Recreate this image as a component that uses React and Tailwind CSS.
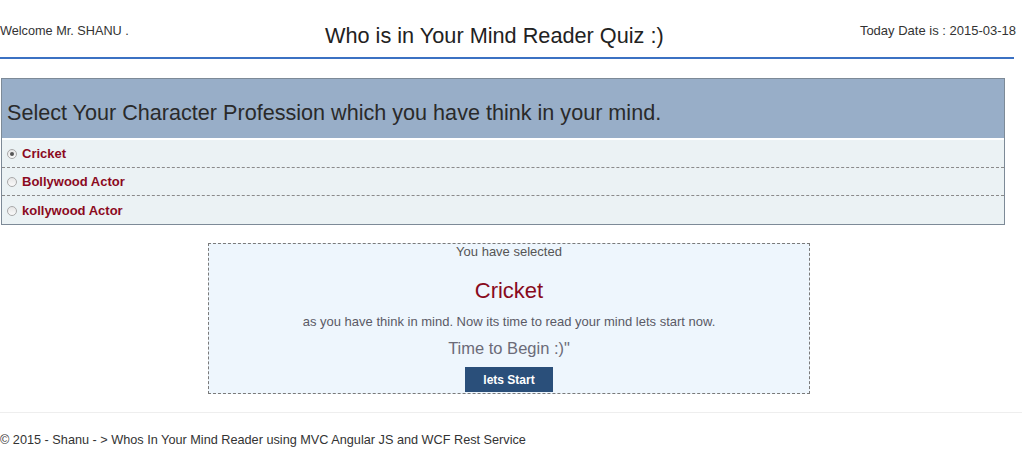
import React from "react";

function Radio({ checked }) {
  return (
    <span className="flex h-[10px] w-[10px] items-center justify-center rounded-full border border-[#a9a9a9] bg-gradient-to-b from-[#e6e6e6] to-[#fafafa]">
      {checked ? <span className="h-[4px] w-[4px] rounded-full bg-[#555]" /> : null}
    </span>
  );
}

function Row({ label, checked, last }) {
  return (
    <div
      className={
        "flex h-[28px] items-center gap-[5px] pl-[5px] pt-[1px] " +
        (last ? "" : "border-b border-dashed border-[#8a8a8a]")
      }
    >
      <Radio checked={checked} />
      <span className="text-[13px] font-bold text-[#8b0a1e]">{label}</span>
    </div>
  );
}

export default function App() {
  return (
    <div className="w-[1022px] bg-white text-[#333]" style={{ fontFamily: '"Liberation Sans", Arial, sans-serif' }}>
      <div className="flex h-[57px] w-[1016px] items-start justify-between">
        <span className="mt-[24px] text-[12.7px] leading-[14px]">Welcome Mr. SHANU .</span>
        <span className="mt-[23px] text-[21.7px] leading-[26px] text-[#222]">Who is in Your Mind Reader Quiz :)</span>
        <span className="mt-[24px] text-[13px] leading-[14px]">Today Date is : 2015-03-18</span>
      </div>
      <div className="h-[2px] w-[1014px] bg-[#3b71c3]" />

      <div className="ml-[1px] mt-[19px] w-[1004px] border border-[#7d8a97] bg-[#ebf2f4]">
        <div className="h-[61px] border-b-2 border-white bg-[#98aec8] pl-[5px] pt-[21px] text-[21.6px] leading-[25px] text-[#2a2a2a]">
          Select Your Character Profession which you have think in your mind.
        </div>
        <Row label="Cricket" checked />
        <Row label="Bollywood Actor" />
        <Row label="kollywood Actor" last />
      </div>

      <div className="mt-[18px] flex w-[1018px] justify-center">
        <div className="flex h-[151px] w-[602px] flex-col items-center border border-dashed border-[#7a7a7a] bg-[#eef6fd]">
          <span className="mt-[1px] text-[13px] leading-[14px] text-[#555]">You have selected</span>
          <span className="mt-[19px] text-[22px] leading-[26px] text-[#880a1c]">Cricket</span>
          <span className="mt-[11px] text-[13px] leading-[14px] text-[#5a5a66]">
            as you have think in mind. Now its time to read your mind lets start now.
          </span>
          <span className="mt-[9px] text-[16.5px] leading-[20px] text-[#6b6b78]">Time to Begin :)"</span>
          <button className="mt-[9px] flex h-[25px] w-[88px] items-center justify-center bg-[#2a4f7a] text-[12px] font-bold text-white">
            lets Start
          </button>
        </div>
      </div>

      <div className="mt-[18px] h-[1px] w-[1022px] bg-[#eeeeee]" />
      <div className="mt-[20px] text-[12.7px] leading-[14px] text-[#333]">
        © 2015 - Shanu - &gt; Whos In Your Mind Reader using MVC Angular JS and WCF Rest Service
      </div>
    </div>
  );
}
